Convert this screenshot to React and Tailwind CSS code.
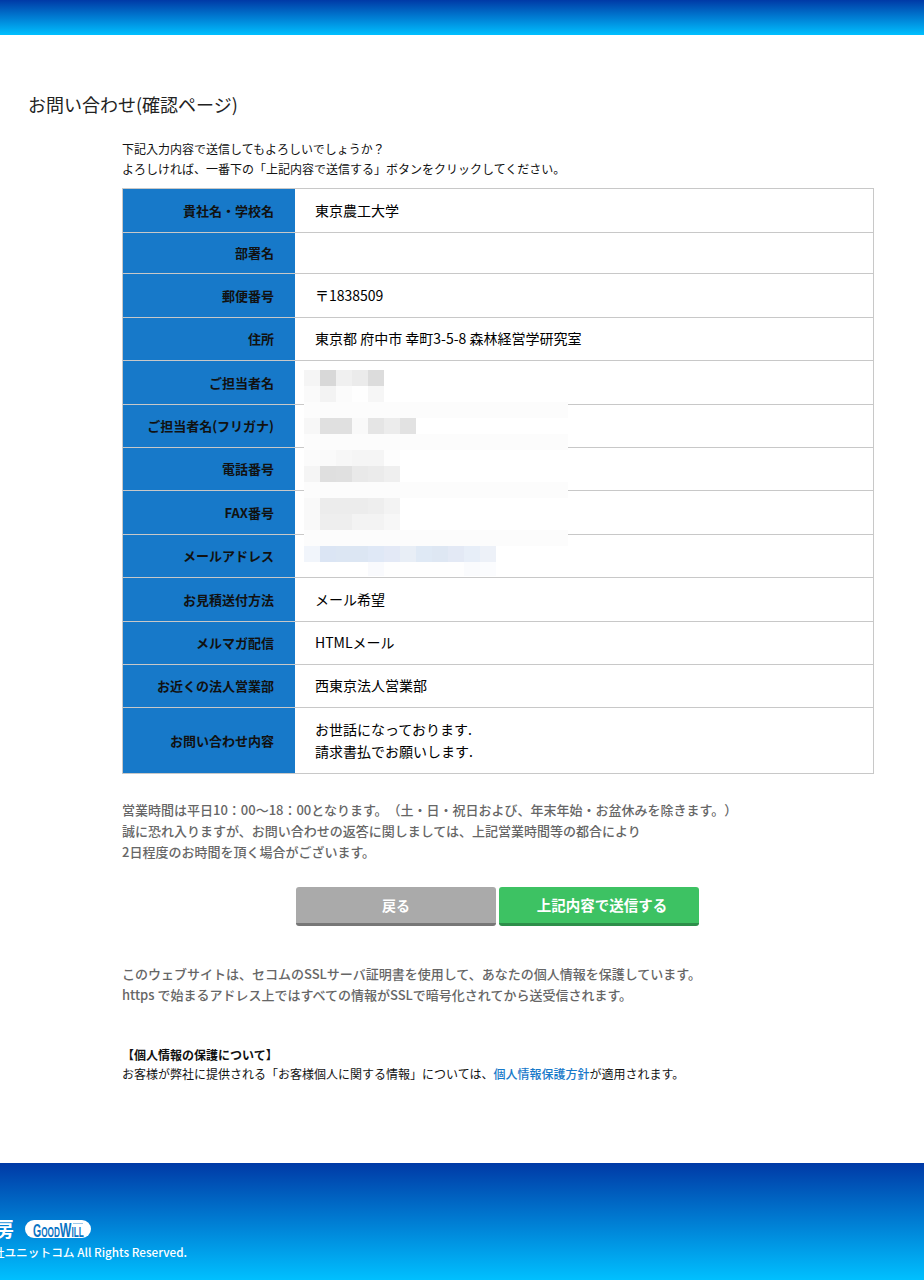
const F = '"Noto Sans CJK JP", "Noto Sans", sans-serif';

const rows = [
  { label: "貴社名・学校名", value: "東京農工大学", h: "h-[44px]" },
  { label: "部署名", value: "", h: "h-[41px]" },
  { label: "郵便番号", value: "〒1838509", h: "h-[44px]" },
  { label: "住所", value: "東京都 府中市 幸町3-5-8 森林経営学研究室", h: "h-[43px]" },
  { label: "ご担当者名", value: "", h: "h-[44px]" },
  { label: "ご担当者名(フリガナ)", value: "", h: "h-[43px]" },
  { label: "電話番号", value: "", h: "h-[43px]" },
  { label: "FAX番号", value: "", h: "h-[44px]" },
  { label: "メールアドレス", value: "", h: "h-[43px]" },
  { label: "お見積送付方法", value: "メール希望", h: "h-[44px]" },
  { label: "メルマガ配信", value: "HTMLメール", h: "h-[43px]" },
  { label: "お近くの法人営業部", value: "西東京法人営業部", h: "h-[43px]" },
  { label: "お問い合わせ内容", value: "お世話になっております.\n請求書払でお願いします.", h: "h-[65px]" },
];

const mosaic = [
  ["bg-[#f5f5f5]", "bg-[#d8d8d8]", "bg-[#f0f0f0]", "bg-[#ebebeb]", "bg-[#dcdcdc]"],
  ["bg-[#fafafa]", "bg-[#f3f3f3]", "bg-[#fbfbfb]", "bg-[#fefefe]", "bg-[#f6f6f6]"],
  "full",
  ["bg-[#f7f7f7]", "bg-[#e0e0e0]", "bg-[#e0e0e0]", "bg-[#f9f9f9]", "bg-[#e5e5e5]", "bg-[#ececec]", "bg-[#e2e2e2]"],
  "full",
  ["bg-[#fbfbfb]", "bg-[#fafafa]", "bg-[#f7f7f7]", "bg-[#f5f5f5]", "bg-[#f5f5f5]", "bg-[#fdfdfd]"],
  ["bg-[#f5f5f5]", "bg-[#dfdfdf]", "bg-[#e0e0e0]", "bg-[#e9e9e9]", "bg-[#ebebeb]", "bg-[#efefef]"],
  "full",
  ["bg-[#f9f9f9]", "bg-[#ececec]", "bg-[#ececec]", "bg-[#ececec]", "bg-[#eeeeee]", "bg-[#f3f3f3]"],
  ["bg-[#f9f9f9]", "bg-[#eeeeee]", "bg-[#eeeeee]", "bg-[#f3f3f3]", "bg-[#f3f3f3]", "bg-[#f7f7f7]"],
  "full",
  ["bg-[#f1f5fb]", "bg-[#dbe5f4]", "bg-[#dce6f3]", "bg-[#dce6f3]", "bg-[#dfe8f6]", "bg-[#e3e9f6]", "bg-[#e8eef6]", "bg-[#dfe9f5]", "bg-[#dee7f3]", "bg-[#e3e9f5]", "bg-[#e7eef8]", "bg-[#edf1f8]"],
  ["bg-white", "bg-white", "bg-white", "bg-white", "bg-[#f9fafd]", "bg-[#fefefe]", "bg-[#fefefe]", "bg-[#fefefe]", "bg-[#fefefe]", "bg-[#fefefe]", "bg-[#fafbfd]", "bg-[#fbfcfe]"],
];

function Mosaic() {
  return (
    <div className="absolute left-[304px] top-[370px] w-[264px] flex flex-col">
      {mosaic.map((row, i) =>
        row === "full" ? (
          <div key={i} className="h-[16px] w-[264px] bg-[#fcfcfc]" />
        ) : (
          <div key={i} className={"flex " + (i === 12 ? "h-[14px]" : "h-[16px]")}>
            {row.map((c, j) => (
              <div key={j} className={"w-[16px] h-full " + c} />
            ))}
          </div>
        )
      )}
    </div>
  );
}

function Row({ r }) {
  return (
    <div className={"flex border-b border-[#c8c8c8] last:border-b-0 " + r.h}>
      <div className="w-[172px] shrink-0 bg-[#1779c9] flex items-center justify-end pr-[21px] text-[13px] font-bold text-[#111]">
        {r.label}
      </div>
      <div className="flex-1 flex items-center pl-[20px] pb-[2px] text-[14px] leading-[22px] text-black whitespace-pre-line">
        {r.value}
      </div>
    </div>
  );
}

export default function App() {
  return (
    <div className="relative w-[924px] h-[1280px] bg-white overflow-hidden [text-spacing-trim:space-all]" style={{ fontFamily: F }}>
      <header className="h-[35px] bg-gradient-to-b from-[#0039a6] to-[#00c0ff]" />
      <main>
        <h1 className="mt-[56px] ml-[28px] text-[18px] leading-[26px] text-[#222] font-normal">お問い合わせ(確認ページ)</h1>
        <div className="ml-[122px] w-[752px]">
          <p className="mt-[22px] text-[12px] leading-[20px] text-[#111]">
            下記入力内容で送信してもよろしいでしょうか？<br />
            よろしければ、一番下の「上記内容で送信する」ボタンをクリックしてください。
          </p>
          <div className="mt-[9px] border border-[#c8c8c8]">
            {rows.map((r) => (
              <Row key={r.label} r={r} />
            ))}
          </div>
          <p className="mt-[25px] text-[13px] leading-[21px] font-medium text-[#666]">
            営業時間は平日10：00～18：00となります。（土・日・祝日および、年末年始・お盆休みを除きます。）<br />
            誠に恐れ入りますが、お問い合わせの返答に関しましては、上記営業時間等の都合により<br />
            2日程度のお時間を頂く場合がございます。
          </p>
          <div className="mt-[25px] ml-[174px] flex gap-[3px]">
            <button className="w-[200px] h-[39px] rounded-[3px] bg-[#aaaaaa] border-b-[3px] border-[#777] text-white font-bold text-[14px]">戻る</button>
            <button className="w-[200px] h-[39px] rounded-[3px] bg-[#3dc263] border-b-[3px] border-[#2d8f4a] pl-[6px] text-white font-bold text-[14.5px]">上記内容で送信する</button>
          </div>
          <p className="mt-[37px] text-[13px] leading-[21px] font-medium text-[#666]">
            このウェブサイトは、セコムのSSLサーバ証明書を使用して、あなたの個人情報を保護しています。<br />
            https で始まるアドレス上ではすべての情報がSSLで暗号化されてから送受信されます。
          </p>
          <div className="mt-[40px] text-[12px] leading-[19px] text-[#111]">
            <p className="font-bold">【個人情報の保護について】</p>
            <p>お客様が弊社に提供される「お客様個人に関する情報」については、<span className="text-[#1779c9] font-medium">個人情報保護方針</span>が適用されます。</p>
          </div>
        </div>
      </main>
      <Mosaic />
      <footer className="absolute left-0 right-0 bottom-0 h-[117px] bg-gradient-to-b from-[#0039a6] to-[#00c0ff]">
        <div className="absolute right-[737px] top-[54px] w-[400px] flex flex-col items-end text-white">
          <div className="flex items-center h-[24px]">
            <span className="text-[20px] font-bold whitespace-nowrap mr-[11px]">パソコン工房</span>
            <span className="relative w-[66px] h-[18px] rounded-full bg-white mr-[96px] flex items-center justify-center overflow-hidden">
              <span className="scale-x-[0.585] whitespace-nowrap font-bold leading-none text-[#0a74c4] flex items-baseline" style={{ fontFamily: '"Liberation Sans", sans-serif' }}>
                <span className="text-[18px]">G</span><span className="text-[14px]">OOD</span><span className="text-[21px]">W</span><span className="text-[14px]">ILL</span>
              </span>
              <span className="absolute left-[48px] top-[3px] w-[10px] h-px bg-[#9cc8ea]" />
            </span>
          </div>
          <div className="text-[11.7px] leading-[18px] font-medium whitespace-nowrap mt-[2px]">Copyright © 株式会社ユニットコム All Rights Reserved.</div>
        </div>
      </footer>
    </div>
  );
}
